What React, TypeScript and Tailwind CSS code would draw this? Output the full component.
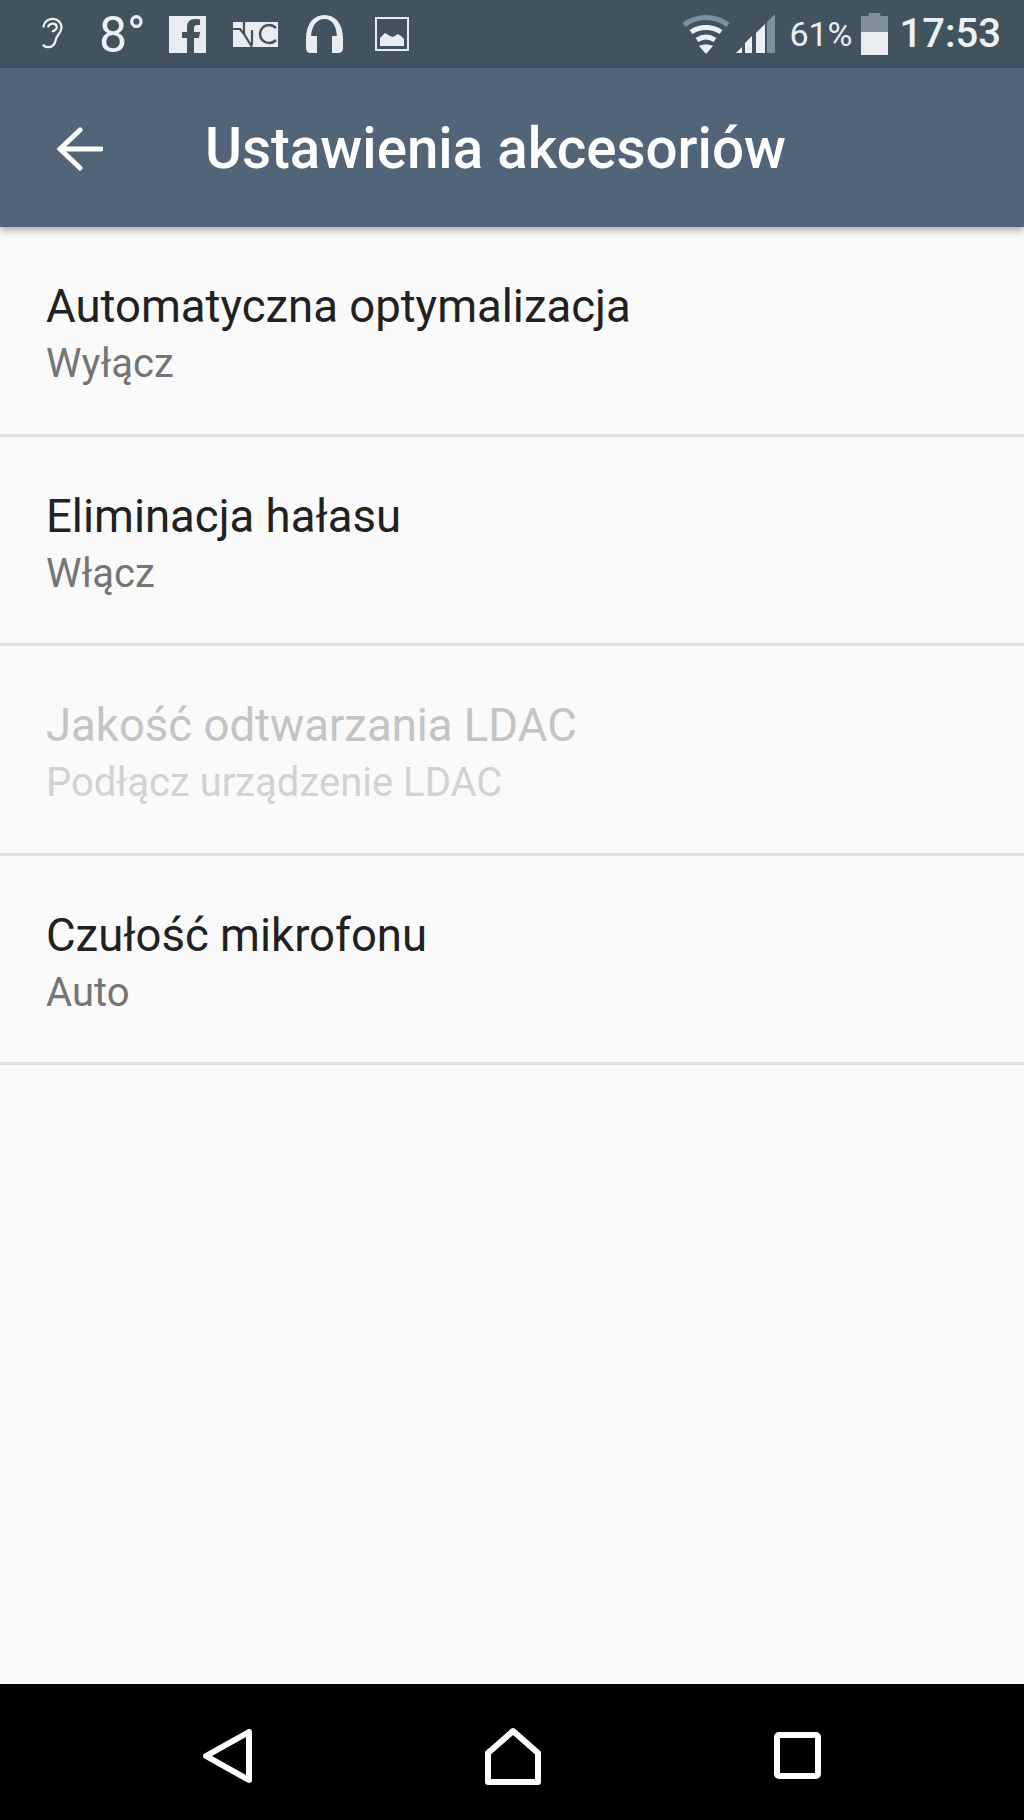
const rows = [
  { title: "Automatyczna optymalizacja", sub: "Wyłącz", disabled: false },
  { title: "Eliminacja hałasu", sub: "Włącz", disabled: false },
  { title: "Jakość odtwarzania LDAC", sub: "Podłącz urządzenie LDAC", disabled: true },
  { title: "Czułość mikrofonu", sub: "Auto", disabled: false },
];

function StatusIcons() {
  return (
    <div className="flex items-center">
      {/* ear */}
      <svg className="ml-[40px] w-[24px] h-[34px]" viewBox="0 0 24 36" fill="none" stroke="#eef1f4" strokeWidth="2.4" strokeLinecap="round">
        <path d="M3 10C4 4 9 2 13 2c5 0 9 4 9 9 0 6-5 8-6 13-1 5-4 8-8 8-2 0-4-1-5-2" />
        <path d="M8 10c1-2 3-3 5-3 3 0 4 2 4 4 0 2-2 3-4 4" />
      </svg>
      <span className="ml-[35px] w-[47px] pt-[1px] text-[50px] leading-none text-[#eef1f4] font-normal">8°</span>
      {/* facebook */}
      <svg className="ml-[23px] w-[37px] h-[37px]" viewBox="0 0 37 37">
        <rect width="37" height="37" fill="#e9edf2" />
        <path d="M25 37V22h5l1-6h-6v-4c0-2 1-3 3-3h3V3.500C30 3.200 28 3 26 3c-5 0-8 3-8 8v5h-5v6h5v15z" fill="#41535f" />
      </svg>
      {/* NC */}
      <svg className="ml-[27px] w-[45px] h-[25px]" viewBox="0 0 45 25" fill="none">
        <rect width="45" height="25" fill="#e9edf2" />
        <path d="M0 7h7l4 5 8 13M11 0v12M19 8v15" stroke="#41535f" strokeWidth="2.200" />
        <path d="M43 6c-2-2-4-3-7-3-5 0-9 4-9 9s4 9 9 9c3 0 5-1 7-3" stroke="#41535f" strokeWidth="2.500" />
      </svg>
      {/* headphones */}
      <svg className="ml-[28px] w-[37px] h-[38px]" viewBox="0 0 37 38">
        <path d="M0 24C0 8 8 0 18.500 0S37 8 37 24v9c0 3-2 5-5 5h-6V21h6v3h-1c0-12-4-20-12.500-20S5 12 5 24H5v-3h6v17H5c-3 0-5-2-5-5z" fill="#e9edf2" />
      </svg>
      {/* picture */}
      <svg className="ml-[32px] w-[34px] h-[34px]" viewBox="0 0 34 34">
        <rect x="1" y="1" width="32" height="32" fill="none" stroke="#e9edf2" strokeWidth="2" />
        <path d="M5 29V21l5-5 5 3 3 1 5-3 3 2 3 3v7z" fill="#e9edf2" />
      </svg>
    </div>
  );
}

function StatusRight() {
  return (
    <div className="flex items-center">
      {/* wifi */}
      <svg className="w-[48px] h-[40px]" viewBox="0 0 48 40" fill="none">
        <path d="M2 11C15 1 33 1 46 11" stroke="#7f8f9b" strokeWidth="5" />
        <path d="M9 18c9-6 21-6 30 0M15 26c6-4 12-4 18 0" stroke="#eef1f4" strokeWidth="5" />
        <path d="M17 32c4-2 10-2 14 0l-7 8z" fill="#eef1f4" />
      </svg>
      {/* signal */}
      <svg className="ml-[6px] w-[40px] h-[40px]" viewBox="0 0 40 40">
        <path d="M0 39l6-6v6z" fill="#eef1f4" />
        <path d="M9 39V29l7-7v17z" fill="#eef1f4" />
        <path d="M20 39V19l9-9v29z" fill="#eef1f4" />
        <path d="M31 39V8l8-8v39z" fill="#7f8f9b" />
      </svg>
      <span className="ml-[13px] text-[34px] leading-none text-[#e9edf2]">61%</span>
      {/* battery */}
      <svg className="ml-[8px] w-[27px] h-[42px]" viewBox="0 0 28 42" preserveAspectRatio="none">
        <path d="M8 0h12v3h8v18H0V3h8z" fill="#7f8f9b" />
        <rect y="19" width="28" height="23" fill="#e9edf2" />
      </svg>
      <span className="ml-[12px] text-[40px] leading-none text-[#eef1f4] font-medium">17:53</span>
    </div>
  );
}

export default function App() {
  return (
    <div className="relative w-[1024px] h-[1820px] flex flex-col bg-[#fafafa] font-['Roboto',sans-serif] overflow-hidden">
      {/* Status bar */}
      <div className="h-[68px] bg-[#41535f] flex items-center justify-between pr-[23px]">
        <StatusIcons />
        <StatusRight />
      </div>

      {/* App bar */}
      <div className="relative z-10 h-[159px] bg-[#526578] flex items-center shadow-[0_3px_8px_rgba(0,0,0,0.35)]">
        <svg className="ml-[57px] w-[46px] h-[44px] mt-[3px]" viewBox="0 0 46 44" fill="none" stroke="#ffffff" strokeWidth="5" strokeLinecap="round">
          <path d="M44 22H4M23 3L3 22l20 19" />
        </svg>
        <h1 className="ml-[102px] pt-[4px] text-[56.500px] font-medium text-white leading-none">Ustawienia akcesoriów</h1>
      </div>

      {/* Settings list */}
      <div className="flex-1">
        {rows.map((row) => (
          <div key={row.title} className="h-[209.500px] border-b-[3px] border-[#e0e0e0] pl-[46px] pt-[52px]">
            <div className={`text-[45.500px] leading-[56px] ${row.disabled ? "text-[#c4c4c4]" : "text-[#212121]"}`}>{row.title}</div>
            <div className={`mt-[3px] text-[40px] leading-[52px] ${row.disabled ? "text-[#d2d2d2]" : "text-[#757575]"}`}>{row.sub}</div>
          </div>
        ))}
      </div>

      {/* Nav bar */}
      <div className="h-[136px] bg-black flex items-center pt-[7px]">
        <svg className="ml-[203px] w-[49px] h-[54px]" viewBox="0 0 49 56" fill="none" stroke="#fff" strokeWidth="6" strokeLinejoin="round" preserveAspectRatio="none">
          <path d="M46 3v50L3 28z" />
        </svg>
        <svg className="ml-[233px] w-[56px] h-[58px]" viewBox="0 0 56 58" fill="none" stroke="#fff" strokeWidth="6" strokeLinejoin="round">
          <path d="M28 4L3 26v29h50V26z" />
        </svg>
        <svg className="ml-[233px] w-[47px] h-[47px]" viewBox="0 0 47 47" fill="none" stroke="#fff" strokeWidth="6">
          <rect x="3" y="3" width="41" height="41" rx="2" />
        </svg>
      </div>
    </div>
  );
}
